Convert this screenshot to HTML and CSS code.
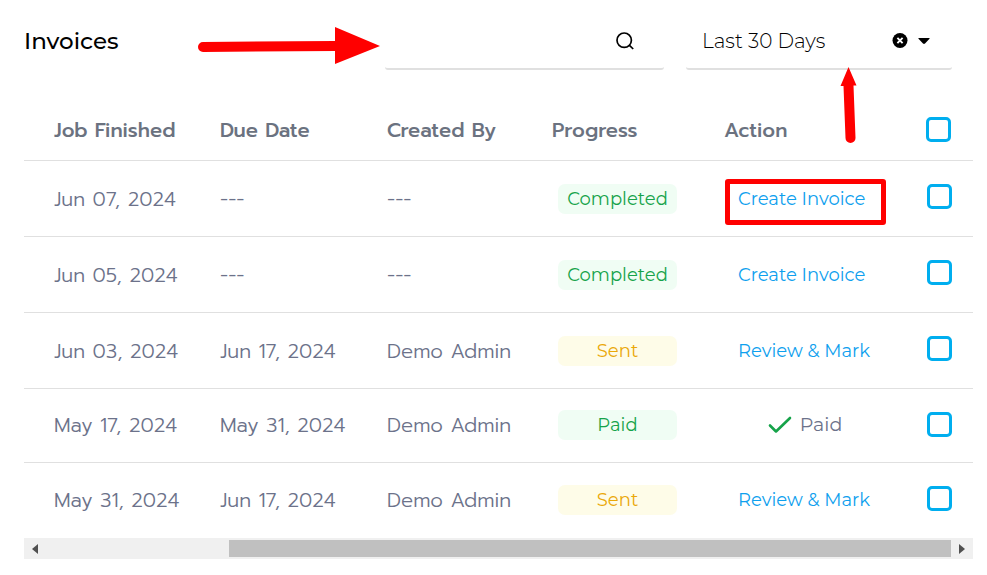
FILE: index.html
```
<!DOCTYPE html>
<html lang="en">
<head>
  <meta charset="UTF-8" />
  <meta name="viewport" content="width=device-width, initial-scale=1.0"/>
  <title>Invoices</title>
  <link rel="stylesheet" href="styles.css">
</head>
<body>

  <header class="toolbar">
    <h1>Invoices</h1>

    <div class="field search">
      <input type="text" aria-label="Search invoices">
      <button type="button" aria-label="Search">
        <svg width="20" height="20" viewBox="0 0 20 20" fill="none" stroke="#000" stroke-width="1.7">
          <circle cx="9.2" cy="9.2" r="7.2"/>
          <path d="M14.2 14.2L18.2 18"/>
        </svg>
      </button>
      <svg class="arrow-right" width="184" height="40" viewBox="0 0 184 40" fill="#f00">
        <path d="M6 16L138 15V1L183 20L138 38V25L6 26A5 5 0 0 1 6 16Z"/>
      </svg>
    </div>

    <div class="field period">
      <select aria-label="Period">
        <option>Last 30 Days</option>
        <option>Last 60 Days</option>
        <option>Last 90 Days</option>
      </select>
      <button type="button" aria-label="Clear period">
        <svg width="16" height="16" viewBox="0 0 16 16">
          <circle cx="8" cy="7.5" r="7.5" fill="#000"/>
          <path d="M5.4 4.9L10.6 10.1M10.6 4.9L5.4 10.1" stroke="#fff" stroke-width="1.9"/>
        </svg>
      </button>
      <svg width="12" height="6" viewBox="0 0 12 6"><path d="M1 0H11Q12 0 11.5 .8L7 5.5Q6 6.3 5 5.5L.5 .8Q0 0 1 0Z"/></svg>
      <svg class="arrow-up" width="18" height="78" viewBox="0 0 18 78" fill="#f00">
        <path d="M8.5 1L16.5 19.5H13.5L15.5 72A5 5 0 0 1 5.5 72L3.5 20H.5Z"/>
      </svg>
    </div>
  </header>

  <div class="table-wrap">
    <table>
      <colgroup>
        <col class="c-job"><col class="c-due"><col class="c-by"><col class="c-progress"><col class="c-action"><col class="c-check">
      </colgroup>
      <thead>
        <tr>
          <th>Job Finished</th>
          <th>Due Date</th>
          <th>Created By</th>
          <th>Progress</th>
          <th>Action</th>
          <th><input type="checkbox" aria-label="Select all"></th>
        </tr>
      </thead>
      <tbody>
        <tr>
          <td>Jun 07, 2024</td>
          <td>---</td>
          <td>---</td>
          <td><span class="badge green">Completed</span></td>
          <td><div class="action marked"><a href="#">Create Invoice</a></div></td>
          <td><input type="checkbox" aria-label="Select Jun 07, 2024"></td>
        </tr>
        <tr>
          <td>Jun 05, 2024</td>
          <td>---</td>
          <td>---</td>
          <td><span class="badge green">Completed</span></td>
          <td><div class="action"><a href="#">Create Invoice</a></div></td>
          <td><input type="checkbox" aria-label="Select Jun 05, 2024"></td>
        </tr>
        <tr>
          <td>Jun 03, 2024</td>
          <td>Jun 17, 2024</td>
          <td>Demo Admin</td>
          <td><span class="badge yellow">Sent</span></td>
          <td><div class="action"><a href="#">Review &amp; Mark</a></div></td>
          <td><input type="checkbox" aria-label="Select Jun 03, 2024"></td>
        </tr>
        <tr class="paid">
          <td>May 17, 2024</td>
          <td>May 31, 2024</td>
          <td>Demo Admin</td>
          <td><span class="badge green">Paid</span></td>
          <td>
            <div class="action done">
              <svg width="24" height="18" viewBox="0 0 24 18" fill="none" stroke="#16a34a" stroke-width="2.6" stroke-linecap="round" stroke-linejoin="round"><path d="M2 9.5L8 15.5L22 2"/></svg>
              Paid
            </div>
          </td>
          <td><input type="checkbox" aria-label="Select May 17, 2024"></td>
        </tr>
        <tr>
          <td>May 31, 2024</td>
          <td>Jun 17, 2024</td>
          <td>Demo Admin</td>
          <td><span class="badge yellow">Sent</span></td>
          <td><div class="action"><a href="#">Review &amp; Mark</a></div></td>
          <td><input type="checkbox" aria-label="Select May 31, 2024"></td>
        </tr>
      </tbody>
    </table>
  </div>

  <div class="scrollbar">
    <button type="button" aria-label="Scroll left"><svg width="6" height="10" viewBox="0 0 6 10"><path d="M6 0V10L0 5Z" fill="#505050"/></svg></button>
    <div class="track"><div class="thumb"></div></div>
    <button type="button" aria-label="Scroll right"><svg width="6" height="10" viewBox="0 0 6 10"><path d="M0 0V10L6 5Z" fill="#505050"/></svg></button>
  </div>

</body>
</html>
```

FILE: styles.css
```
* {
  box-sizing: border-box;
}

body {
  font-family: Montserrat, Inter, sans-serif;
  margin: 0;
  padding: 14px 14px 0 24px;
  background: #fff;
  color: #000;
}

button {
  display: flex;
  align-items: center;
  justify-content: center;
  padding: 0;
  border: 0;
  background: none;
  cursor: pointer;
}

.toolbar {
  display: flex;
  align-items: center;
  gap: 22px;
  margin-right: 21px;
}

h1 {
  flex: 1;
  margin: 0;
  font-size: 23px;
  font-weight: 500;
  line-height: 28px;
  padding-bottom: 2px;
}

.field {
  position: relative;
  display: flex;
  align-items: center;
  height: 56px;
  border-bottom: 2px solid #e0e0e0;
  border-radius: 3px;
}

.field input,
.field select {
  flex: 1;
  min-width: 0;
  padding: 0;
  border: 0;
  outline: 0;
  background: none;
  font-family: inherit;
  font-size: 20px;
  font-weight: 300;
  color: #000;
  appearance: none;
}

.search {
  width: 279px;
  padding: 0 29px 0 16px;
}

.period {
  width: 266px;
  gap: 10px;
  padding: 0 22px 0 16px;
}

/* red callouts */
.arrow-right {
  position: absolute;
  right: 100%;
  top: 12px;
  margin-right: 4px;
}

.arrow-up {
  position: absolute;
  right: 94px;
  top: 52px;
}

.marked::after {
  content: "";
  position: absolute;
  inset: -9px -16px -15px -13px;
  border: 5px solid #f00;
  border-radius: 3px;
  pointer-events: none;
}

.table-wrap {
  margin-top: 30px;
}

table {
  width: 100%;
  table-layout: fixed;
  border-collapse: separate;
  border-spacing: 0;
  font-family: Prompt, Montserrat, Inter, sans-serif;
  font-size: 20px;
  font-weight: 300;
  color: #6c728a;
}

.c-job { width: 196px; }
.c-due { width: 167px; }
.c-by { width: 165px; }
.c-progress { width: 172px; }
.c-action { width: 202px; }
.c-check { width: 47px; }

th,
td {
  padding: 0;
  height: 76px;
  border-bottom: 1px solid #e0e0e0;
  text-align: left;
  white-space: nowrap;
}

th {
  height: 61px;
  font-weight: 500;
  color: #6b7280;
}

th:first-child,
td:first-child {
  padding-left: 30px;
}

th:last-child {
  padding-bottom: 2px;
}

td:last-child {
  padding: 0 0 4px 1px;
}

.paid td {
  height: 74px;
  padding-bottom: 2px;
}

tbody tr:last-child td {
  height: 75px;
  padding-bottom: 2px;
  border-bottom: 0;
}

tbody tr:last-child td:last-child {
  padding-bottom: 4px;
}

input[type="checkbox"] {
  display: block;
  width: 25px;
  height: 25px;
  margin: 0;
  border: 3px solid #00aeef;
  border-radius: 5px;
  background: #fff;
  appearance: none;
}

input[type="checkbox"]:checked {
  background: #00aeef;
}

.badge {
  display: block;
  width: 119px;
  margin-left: 6px;
  border-radius: 7px;
  font-family: Montserrat, Inter, sans-serif;
  font-size: 18px;
  font-weight: 400;
  line-height: 30px;
  text-align: center;
}

.green {
  background: #f0fdf4;
  color: #16a34a;
}

.yellow {
  background: #fefce8;
  color: #eaa808;
}

.action {
  position: relative;
  width: 132px;
  margin-left: 14px;
  font-family: Montserrat, Inter, sans-serif;
  font-size: 18px;
  font-weight: 400;
  line-height: 22px;
}

.action a {
  color: #0ea0ee;
  text-decoration: none;
}

.done {
  display: flex;
  align-items: center;
  justify-content: center;
  gap: 8px;
  padding-left: 2px;
  font-size: 19px;
}

.scrollbar {
  display: flex;
  height: 21px;
  background: #f0f0f0;
}

.scrollbar button {
  width: 22px;
}

.track {
  flex: 1;
  padding: 2px 0;
}

.thumb {
  width: calc(80% - 2px);
  height: 17px;
  margin-left: auto;
  background: #c0c0c0;
}
```
